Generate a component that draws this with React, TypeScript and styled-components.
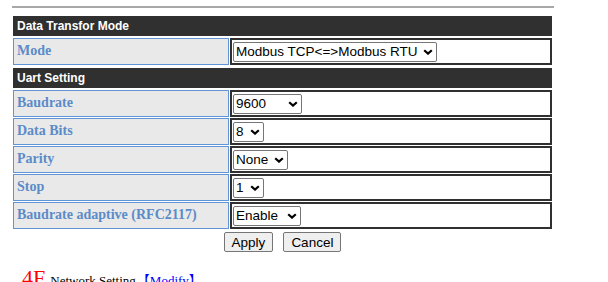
import * as React from "react";
import styled, { createGlobalStyle } from "styled-components";

const GlobalStyle = createGlobalStyle`
  body {
    margin: 0;
    background: #ffffff;
    font-family: "Liberation Serif", "Times New Roman", serif;
  }
`;

const Page = styled.div`
  width: 542px;
  padding: 6px 0 0 12px;
`;

const Rule = styled.div`
  height: 2px;
  background: #a8a8a8;
  margin-bottom: 8px;
`;

const Section = styled.div`
  width: 539px;
  margin-left: 1px;
  display: grid;
  grid-template-columns: 216px 1fr;
  column-gap: 1px;
  row-gap: 1px;
  & + & {
    margin-top: 3px;
  }
`;

const SectionTitle = styled.div`
  grid-column: 1 / -1;
  height: 20px;
  margin-bottom: 1px;
  padding-left: 4px;
  background: #303030;
  color: #ffffff;
  font: bold 12px/20px "Liberation Sans", Arial, sans-serif;
`;

const Label = styled.div`
  height: 27px;
  box-sizing: border-box;
  display: flex;
  align-items: center;
  padding: 0 3px 1px;
  background: #e9e9e9;
  border: 1px solid #5f95d6;
  color: #5b8bc8;
  font: bold 14px "Liberation Serif", "Times New Roman", serif;
`;

const Field = styled.div`
  height: 27px;
  box-sizing: border-box;
  display: flex;
  align-items: center;
  padding: 0 0 0 1px;
  border: 2px solid #303030;
`;

const SelectBox = styled.span`
  position: relative;
  display: inline-flex;
`;

const Select = styled.select<{ $width: number }>`
  appearance: none;
  box-sizing: border-box;
  width: ${({ $width }) => $width}px;
  height: 20px;
  margin: 0;
  padding: 0 0 0 2px;
  font: 13.5px "Liberation Sans", Arial, sans-serif;
  color: #000;
  background: #fff;
  border: 1px solid #767676;
  border-radius: 2px;
  outline: none;
`;

const Chevron = styled.svg`
  position: absolute;
  right: 4px;
  top: 7px;
  width: 10px;
  height: 6px;
  pointer-events: none;
`;

const Actions = styled.div`
  display: flex;
  justify-content: center;
  gap: 10px;
  width: 539px;
  margin: 3px 0 0 1px;
`;

const Button = styled.button`
  height: 20px;
  padding: 0 7px;
  font: 13.5px "Liberation Sans", Arial, sans-serif;
  color: #000;
  background: #efefef;
  border: 1px solid #767676;
  border-radius: 2px;
`;

const NextHeading = styled.div`
  margin: 15px 0 0 10px;
  display: flex;
  align-items: flex-end;
  white-space: nowrap;
`;

const Step = styled.span`
  color: #ff0000;
  font: 22px/22px "Liberation Serif", "Times New Roman", serif;
  margin-right: 5px;
`;

const HeadingText = styled.span`
  color: #000;
  margin-bottom: 2px;
  font: 13px/13px "Liberation Serif", "Times New Roman", serif;
`;

const ModifyLink = styled.a`
  color: #0000ff;
  text-decoration: none;
  margin: 0 0 2px 1px;
  font: 13px/13px "Liberation Serif", "Noto Sans CJK SC", serif;
`;

type Row = { label: string; options: string[]; width: number };

const uartRows: Row[] = [
  { label: "Baudrate", options: ["9600", "115200"], width: 69 },
  { label: "Data Bits", options: ["8", "7"], width: 31 },
  { label: "Parity", options: ["None", "Odd", "Even"], width: 55 },
  { label: "Stop", options: ["1", "2"], width: 31 },
  { label: "Baudrate adaptive (RFC2117)", options: ["Enable", "Disable"], width: 68 },
];

function Dropdown({ width, options }: { width: number; options: string[] }) {
  return (
    <SelectBox>
      <Select $width={width} defaultValue={options[0]}>
        {options.map((o) => (
          <option key={o}>{o}</option>
        ))}
      </Select>
      <Chevron viewBox="0 0 10 6">
        <path d="M1.2 1.2 L5 4.6 L8.8 1.2" fill="none" stroke="#000" strokeWidth="2.2" />
      </Chevron>
    </SelectBox>
  );
}

export default function App() {
  return (
    <Page>
      <GlobalStyle />
      <Rule />
      <Section>
        <SectionTitle>Data Transfor Mode</SectionTitle>
        <Label>Mode</Label>
        <Field>
          <Dropdown width={204} options={["Modbus TCP<=>Modbus RTU"]} />
        </Field>
      </Section>
      <Section>
        <SectionTitle>Uart Setting</SectionTitle>
        {uartRows.map((r) => (
          <React.Fragment key={r.label}>
            <Label>{r.label}</Label>
            <Field>
              <Dropdown width={r.width} options={r.options} />
            </Field>
          </React.Fragment>
        ))}
      </Section>
      <Actions>
        <Button>Apply</Button>
        <Button>Cancel</Button>
      </Actions>
      <NextHeading>
        <Step>4F</Step>
        <HeadingText>Network Setting</HeadingText>
        <ModifyLink href="#">【Modify】</ModifyLink>
      </NextHeading>
    </Page>
  );
}
